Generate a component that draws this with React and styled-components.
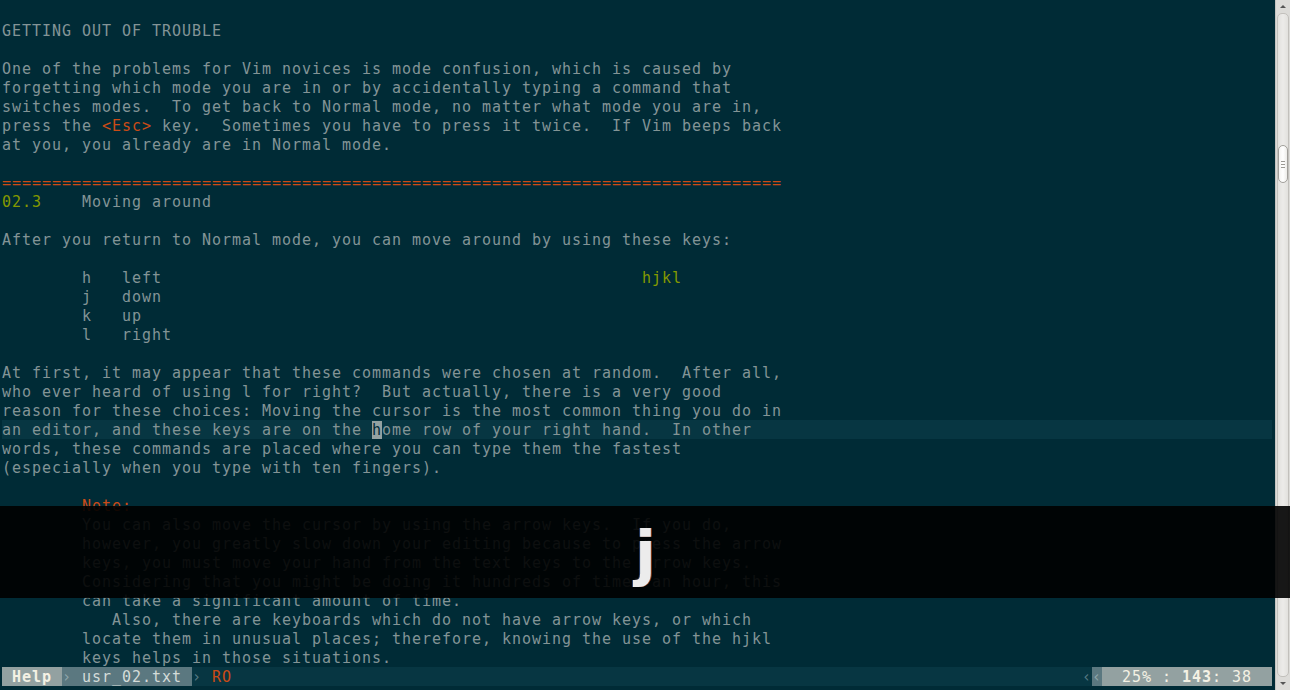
import React from "react";
import styled, { createGlobalStyle } from "styled-components";

const GlobalStyle = createGlobalStyle`
  html, body {
    margin: 0;
    padding: 0;
    background: #002b36;
    overflow: hidden;
  }
`;

// each row: list of segments, a plain string is normal text
const rows = [
  [],
  ["GETTING OUT OF TROUBLE"],
  [],
  ["One of the problems for Vim novices is mode confusion, which is caused by"],
  ["forgetting which mode you are in or by accidentally typing a command that"],
  ["switches modes.  To get back to Normal mode, no matter what mode you are in,"],
  ["press the ", { t: "<Esc>", k: "special" }, " key.  Sometimes you have to press it twice.  If Vim beeps back"],
  ["at you, you already are in Normal mode."],
  [],
  [{ t: "=".repeat(78), k: "special" }],
  [{ t: "02.3", k: "title" }, "    Moving around"],
  [],
  ["After you return to Normal mode, you can move around by using these keys:"],
  [],
  ["        h   left" + " ".repeat(48), { t: "hjkl", k: "title" }],
  ["        j   down"],
  ["        k   up"],
  ["        l   right"],
  [],
  ["At first, it may appear that these commands were chosen at random.  After all,"],
  ["who ever heard of using l for right?  But actually, there is a very good"],
  ["reason for these choices: Moving the cursor is the most common thing you do in"],
  ["an editor, and these keys are on the ", { t: "h", k: "cursor" }, "ome row of your right hand.  In other"],
  ["words, these commands are placed where you can type them the fastest"],
  ["(especially when you type with ten fingers)."],
  [],
  ["        ", { t: "Note:", k: "special" }],
  ["        You can also move the cursor by using the arrow keys.  If you do,"],
  ["        however, you greatly slow down your editing because to press the arrow"],
  ["        keys, you must move your hand from the text keys to the arrow keys."],
  ["        Considering that you might be doing it hundreds of times an hour, this"],
  ["        can take a significant amount of time."],
  ["           Also, there are keyboards which do not have arrow keys, or which"],
  ["        locate them in unusual places; therefore, knowing the use of the hjkl"],
  ["        keys helps in those situations."],
];

const CURSOR_ROW = 22;

export default function App() {
  return (
    <Screen>
      <GlobalStyle />
      <Editor>
        {rows.map((row, i) => (
          <Line key={i} $current={i === CURSOR_ROW}>
            {row.map((seg, j) =>
              typeof seg === "string" ? (
                <React.Fragment key={j}>{seg}</React.Fragment>
              ) : (
                <Token key={j} $kind={seg.k}>
                  {seg.t}
                </Token>
              )
            )}
          </Line>
        ))}
        <StatusLine>
          <Seg $bg="#93a1a1" $fg="#f4f1e4" $bold> Help </Seg>
          <Seg $bg="#5b7880" $fg="#8fa6ab">›</Seg>
          <Seg $bg="#5b7880" $fg="#d4dcd9"> usr_02.txt </Seg>
          <Seg $fg="#587a84">›</Seg>
          <Seg $fg="#cb4b16"> RO</Seg>
          <Fill />
          <Seg $fg="#587a84">‹</Seg>
          <Seg $bg="#5b7880" $fg="#8fa6ab">‹</Seg>
          <Seg $bg="#93a1a1" $fg="#f4f1e4">
            {"  25% : "}
            <Strong>143</Strong>
            {": 38  "}
          </Seg>
        </StatusLine>
      </Editor>
      <Scrollbar>
        <ArrowButton>
          <Arrow $up />
        </ArrowButton>
        <Rail>
          <Thumb $offset={131}>
            <Grip />
            <Grip />
            <Grip />
          </Thumb>
        </Rail>
        <ArrowButton>
          <Arrow />
        </ArrowButton>
      </Scrollbar>
      <KeyOverlay>
        <KeyGlyph>j</KeyGlyph>
      </KeyOverlay>
    </Screen>
  );
}

const Screen = styled.div`
  position: relative;
  display: flex;
  width: 1290px;
  height: 690px;
  overflow: hidden;
  background: #002b36;
`;

const Editor = styled.div`
  flex: 1;
  display: flex;
  flex-direction: column;
  padding: 2px 3px 0 2px;
  font-family: "DejaVu Sans Mono", monospace;
  font-size: 15px;
  letter-spacing: 0.97px;
  color: #839496;
`;

const Line = styled.div`
  height: 19px;
  box-sizing: border-box;
  padding-top: 1px;
  line-height: 19px;
  white-space: pre;
  background: ${({ $current }) => ($current ? "#073642" : "transparent")};
`;

const tokenColors = {
  special: "color: #cb4b16;",
  title: "color: #859900;",
  cursor: "color: #002b36; background: #93a1a1;",
};

const Token = styled.span`
  ${({ $kind }) => tokenColors[$kind]}
`;

const StatusLine = styled.div`
  display: flex;
  height: 19px;
  line-height: 19px;
  white-space: pre;
  background: #073642;
`;

const Seg = styled.span`
  background: ${({ $bg }) => $bg || "transparent"};
  color: ${({ $fg }) => $fg};
  font-weight: ${({ $bold }) => ($bold ? "bold" : "normal")};
  padding-top: 1px;
`;

const Strong = styled.b`
  font-weight: bold;
`;

const Fill = styled.span`
  flex: 1;
`;

const Scrollbar = styled.div`
  width: 15px;
  display: flex;
  flex-direction: column;
  background: #dcdbd8;
  border-left: 1px solid #c4c3c0;
  box-sizing: border-box;
`;

const ArrowButton = styled.div`
  height: 13px;
  display: flex;
  align-items: center;
  justify-content: center;
`;

const Arrow = styled.div`
  width: 0;
  height: 0;
  border-left: 3px solid transparent;
  border-right: 3px solid transparent;
  ${({ $up }) =>
    $up ? "border-bottom: 3px solid #555;" : "border-top: 3px solid #555;"}
`;

const Rail = styled.div`
  flex: 1;
  margin: 0 1px;
  border: 1px solid #c2c0bc;
  border-radius: 5px;
  background: linear-gradient(to right, #e2e1de, #ecebe9 50%, #e2e1de);
`;

const Thumb = styled.div`
  margin-top: ${({ $offset }) => $offset}px;
  height: 38px;
  box-sizing: border-box;
  border: 1px solid #a19f9b;
  border-radius: 5px;
  background: linear-gradient(to right, #f4f3f1, #ffffff 50%, #ecebe8);
  display: flex;
  flex-direction: column;
  align-items: center;
  justify-content: center;
  gap: 2px;
`;

const Grip = styled.div`
  width: 4px;
  height: 1px;
  background: #9a9893;
`;

const KeyOverlay = styled.div`
  position: absolute;
  left: 0;
  right: 0;
  top: 506px;
  height: 92px;
  background: rgba(0, 0, 0, 0.9);
  display: flex;
  align-items: center;
  justify-content: center;
`;

const KeyGlyph = styled.div`
  font-family: "DejaVu Sans", sans-serif;
  font-weight: bold;
  font-size: 61px;
  line-height: 61px;
  color: #ececec;
  padding-left: 1px;
  text-shadow: 1px 0 0 rgba(210, 90, 30, 0.7), -1px 0 0 rgba(70, 110, 190, 0.5);
`;
